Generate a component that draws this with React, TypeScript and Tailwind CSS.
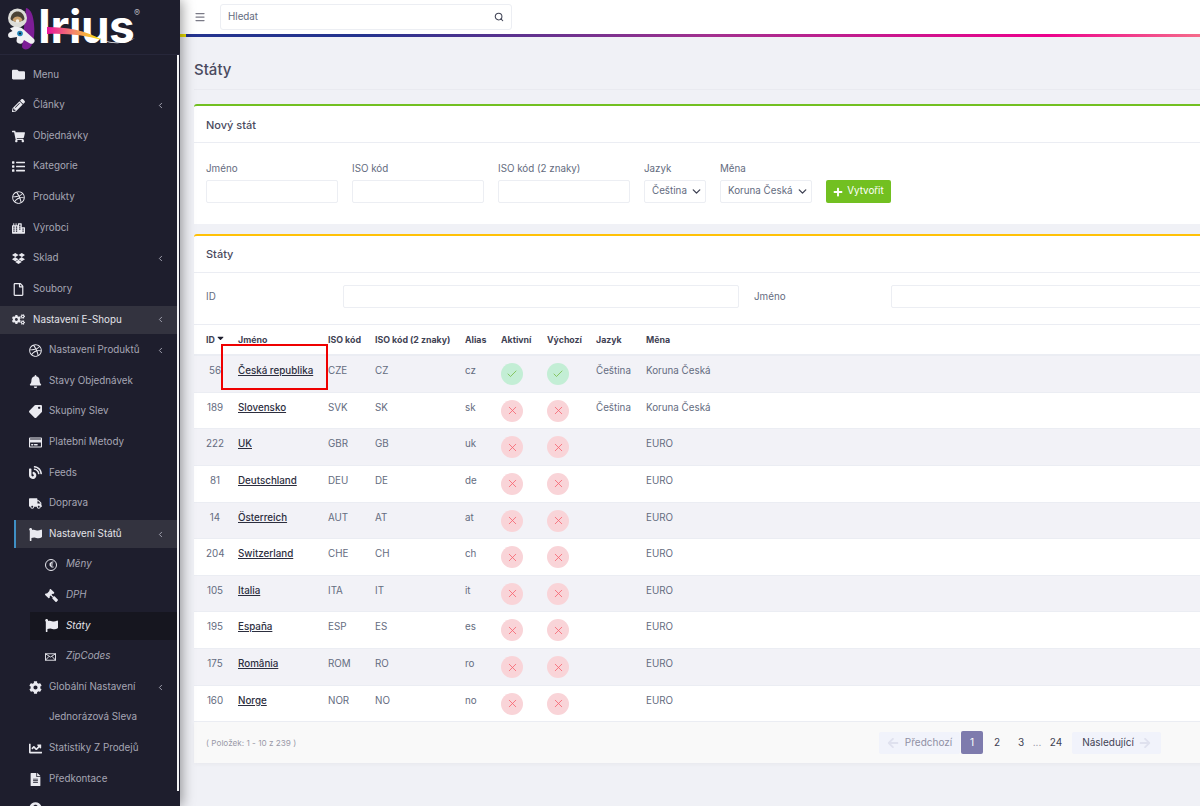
import React from "react";
import { ChevronLeft, Search, Menu as MenuIcon, Check, X, ChevronDown } from "lucide-react";
import {
  FaFolder, FaPencilAlt, FaShoppingCart, FaList, FaDribbble, FaCity, FaDropbox, FaRegFile, FaCogs,
  FaBell, FaTag, FaRegCreditCard, FaBlog, FaTruck, FaFlag, FaGavel, FaCog, FaChartLine, FaFileAlt,
  FaPlus, FaArrowLeft, FaArrowRight, FaCaretDown, FaEuroSign, FaUserCircle,
} from "react-icons/fa";

type NavItem = {
  label: string;
  icon?: React.ReactNode;
  level: 1 | 2 | 3;
  chevron?: boolean;
  active?: "open" | "branch" | "current";
};

const ic = "w-[13px] h-[13px]";
const EuroCircle = () => (
  <span className="flex h-[12px] w-[12px] items-center justify-center rounded-full border-[1.5px] border-[#e8e8ee]">
    <FaEuroSign className="h-[7px] w-[7px]" />
  </span>
);
const ZipIcon = () => (
  <svg viewBox="0 0 12 8" className="h-[8px] w-[11px]" fill="none" stroke="currentColor" strokeWidth="1">
    <rect x="0.5" y="0.5" width="11" height="7" />
    <path d="M0.5 0.5 6 4l5.5-3.5M0.5 7.5 4.5 3.2M11.5 7.5 7.5 3.2" />
  </svg>
);

const nav: NavItem[] = [
  { label: "Menu", icon: <FaFolder className={ic} />, level: 1 },
  { label: "Články", icon: <FaPencilAlt className={ic} />, level: 1, chevron: true },
  { label: "Objednávky", icon: <FaShoppingCart className={ic} />, level: 1 },
  { label: "Kategorie", icon: <FaList className={ic} />, level: 1 },
  { label: "Produkty", icon: <FaDribbble className={ic} />, level: 1 },
  { label: "Výrobci", icon: <FaCity className={ic} />, level: 1 },
  { label: "Sklad", icon: <FaDropbox className={ic} />, level: 1, chevron: true },
  { label: "Soubory", icon: <FaRegFile className={ic} />, level: 1 },
  { label: "Nastavení E-Shopu", icon: <FaCogs className={ic} />, level: 1, chevron: true, active: "open" },
  { label: "Nastavení Produktů", icon: <FaDribbble className={ic} />, level: 2, chevron: true },
  { label: "Stavy Objednávek", icon: <FaBell className={ic} />, level: 2 },
  { label: "Skupiny Slev", icon: <FaTag className={`${ic} -scale-x-100`} />, level: 2 },
  { label: "Platební Metody", icon: <FaRegCreditCard className={ic} />, level: 2 },
  { label: "Feeds", icon: <FaBlog className={ic} />, level: 2 },
  { label: "Doprava", icon: <FaTruck className={ic} />, level: 2 },
  { label: "Nastavení Států", icon: <FaFlag className={ic} />, level: 2, chevron: true, active: "branch" },
  { label: "Měny", icon: <EuroCircle />, level: 3 },
  { label: "DPH", icon: <FaGavel className={`${ic} -scale-x-100`} />, level: 3 },
  { label: "Státy", icon: <FaFlag className={ic} />, level: 3, active: "current" },
  { label: "ZipCodes", icon: <ZipIcon />, level: 3 },
  { label: "Globální Nastavení", icon: <FaCog className={ic} />, level: 2, chevron: true },
  { label: "Jednorázová Sleva", level: 2 },
  { label: "Statistiky Z Prodejů", icon: <FaChartLine className={ic} />, level: 2 },
  { label: "Předkontace", icon: <FaFileAlt className={ic} />, level: 2 },
];

function NavRow({ item }: { item: NavItem }) {
  const levelClass = item.level === 1 ? "pl-[12px]" : item.level === 2 ? "ml-[14px] pl-[15px]" : "ml-[30px] pl-[15px]";
  const iconBox = item.level === 1 ? "w-[21px]" : item.level === 2 ? "w-[20px]" : "w-[21px]";
  let bg = "";
  if (item.active === "open") bg = "bg-[#33333f]";
  if (item.active === "branch") bg = "bg-[#33333f] border-l-2 border-[#3f8fc4] !pl-[13px]";
  if (item.active === "current") bg = "bg-[#16161f]";
  const text = item.active ? "text-[#e4e4ea]" : "text-[#a6a6b4]";
  return (
    <div className={`my-[1px] flex h-[28.62px] shrink-0 items-center pr-[12px] ${levelClass} ${bg}`}>
      <span className={`flex shrink-0 items-center text-[#eaeaf0] ${iconBox}`}>{item.icon}</span>
      <span className={`flex-1 whitespace-nowrap text-[9.8px] ${item.level === 3 ? "italic" : ""} ${text}`}>{item.label}</span>
      {item.chevron && <ChevronLeft className="h-[9px] w-[9px] shrink-0 text-[#a6a6b4]" strokeWidth={2.5} />}
    </div>
  );
}

function Logo() {
  return (
    <div className="relative h-[55px] shrink-0 border-b border-[#27273a]">
      <svg viewBox="0 0 150 54" className="absolute left-0 top-0 h-[54px] w-[150px]">
        <path d="M26 8c5 1 7 7 8 16 1 10 0 22-6 25-3 1-5 0-6-2z" fill="#7d1d96" />
        <circle cx="17.5" cy="18" r="9.5" fill="#dcdcd8" />
        <path d="M10.5 19c.5-5 3.5-7.5 7-7.5s6.500 2.500 7 7.500c-1.500 3.500-12.500 3.500-14 0z" fill="#4a4236" />
        <path d="M12.500 20c1-2.500 3-3.500 5-3.500s4 1 5 3.500c-1.500 2.500-8.500 2.500-10 0z" fill="#c9a06e" />
        <circle cx="17.500" cy="21" r="1.800" fill="#f4eee3" />
        <path d="M10 28.500c4-2.500 10-2 13 .5l11 10c2 2.500-1 6-4 4.500l-6-3.500-1 2c-1 3-6 2-6.500-1l.5-4-6 1c-3 .5-4-4-1.500-5.500l3-1.500z" fill="#f1f1f3" />
        <circle cx="20" cy="33.500" r="2.800" fill="#2184b8" />
        <circle cx="20" cy="33.500" r="1.100" fill="#12232e" />
      </svg>
      <span className="absolute left-[38px] top-0 block h-[54px] whitespace-nowrap [font-family:'Liberation_Sans',sans-serif] text-[46px] font-bold leading-[52px] tracking-[-0.5px] text-white">Irius</span>
      <svg viewBox="0 0 150 54" className="absolute left-0 top-0 h-[54px] w-[150px]">
        <defs>
          <linearGradient id="sw" x1="0" x2="1" y1="0" y2="0">
            <stop offset="0" stopColor="#e8139c" />
            <stop offset="0.5" stopColor="#f58a6a" />
            <stop offset="1" stopColor="#f7e800" />
          </linearGradient>
        </defs>
        <path d="M47 27c20 0 38 3 55 13-18-5-36-7-55-6z" fill="url(#sw)" />
        <path d="M102 40c10 3 22 4 33-2-8 6-22 7-33 2z" fill="#ffffff" />
      </svg>
      <span className="absolute left-[134px] top-[7px] text-[9px] leading-[12px] text-[#b5b5bd]">®</span>
    </div>
  );
}

function Sidebar() {
  return (
    <aside className="relative z-10 flex h-full w-[180px] shrink-0 flex-col bg-[#1e1e2d] shadow-[2px_0_12px_rgba(0,0,0,0.4)]">
      <Logo />
      <div className="flex min-h-0 flex-1">
        <nav className="flex w-[177px] shrink-0 flex-col overflow-hidden pt-[4.7px]">
          {nav.map((n) => (
            <NavRow key={n.label} item={n} />
          ))}
          <div className="ml-[14px] flex h-[28px] shrink-0 pl-[15px] pt-[8px] text-[#eaeaf0]">
            <FaUserCircle className={ic} />
          </div>
        </nav>
        <div className="h-[736px] w-[2px] shrink-0 bg-[#f4f4f6]" />
      </div>
    </aside>
  );
}

const Field = ({ label, width }: { label: string; width: string }) => (
  <div className={`flex flex-col ${width}`}>
    <label className="mb-[4px] h-[14px] whitespace-nowrap text-[9.8px] leading-[14px] text-[#646c80]">{label}</label>
    <input readOnly className="h-[23px] w-full rounded-[2px] border border-[#eceef3] bg-white" />
  </div>
);

const SelectField = ({ label, value, width }: { label: string; value: string; width: string }) => (
  <div className={`flex flex-col ${width}`}>
    <label className="mb-[4px] h-[14px] text-[9.8px] leading-[14px] text-[#646c80]">{label}</label>
    <div className="flex h-[23px] items-center justify-between rounded-[2px] border border-[#eceef3] bg-white pl-[7px] pr-[2px]">
      <span className="whitespace-nowrap text-[9.8px] text-[#646c80]">{value}</span>
      <ChevronDown className="h-[13px] w-[13px] shrink-0 text-[#3f4254]" strokeWidth={2.5} />
    </div>
  </div>
);

type Row = { id: string; name: string; iso: string; iso2: string; alias: string; ok?: boolean; lang?: string; cur: string };
const rows: Row[] = [
  { id: "56", name: "Česká republika", iso: "CZE", iso2: "CZ", alias: "cz", ok: true, lang: "Čeština", cur: "Koruna Česká" },
  { id: "189", name: "Slovensko", iso: "SVK", iso2: "SK", alias: "sk", lang: "Čeština", cur: "Koruna Česká" },
  { id: "222", name: "UK", iso: "GBR", iso2: "GB", alias: "uk", cur: "EURO" },
  { id: "81", name: "Deutschland", iso: "DEU", iso2: "DE", alias: "de", cur: "EURO" },
  { id: "14", name: "Österreich", iso: "AUT", iso2: "AT", alias: "at", cur: "EURO" },
  { id: "204", name: "Switzerland", iso: "CHE", iso2: "CH", alias: "ch", cur: "EURO" },
  { id: "105", name: "Italia", iso: "ITA", iso2: "IT", alias: "it", cur: "EURO" },
  { id: "195", name: "España", iso: "ESP", iso2: "ES", alias: "es", cur: "EURO" },
  { id: "175", name: "România", iso: "ROM", iso2: "RO", alias: "ro", cur: "EURO" },
  { id: "160", name: "Norge", iso: "NOR", iso2: "NO", alias: "no", cur: "EURO" },
];

const cols = "grid grid-cols-[32px_90px_47px_90px_36px_46px_49px_50px_1fr] pl-[12px]";

const Badge = ({ ok }: { ok?: boolean }) =>
  ok ? (
    <span className="mt-[7px] flex h-[22px] w-[22px] items-center justify-center rounded-full bg-[#c3eed5]">
      <Check className="h-[12px] w-[12px] text-[#72b83c]" strokeWidth={1.5} />
    </span>
  ) : (
    <span className="mt-[7px] flex h-[22px] w-[22px] items-center justify-center rounded-full bg-[#f9d4d8]">
      <X className="h-[13px] w-[13px] text-[#f6626f]" strokeWidth={1.5} />
    </span>
  );

function StatesTable() {
  return (
    <div className="relative">
      <div className={`${cols} h-[31px] items-center border-b-2 border-[#ebedf3] text-[8.8px] font-bold text-[#3f4254]`}>
        <span className="flex items-center">ID<FaCaretDown className="ml-[1px] h-[10px] w-[9px] -translate-y-[2px] text-[#1e1e2d]" /></span>
        <span className="underline">Jméno</span>
        <span>ISO kód</span>
        <span className="whitespace-nowrap">ISO kód (2 znaky)</span>
        <span>Alias</span>
        <span>Aktivní</span>
        <span>Výchozí</span>
        <span>Jazyk</span>
        <span>Měna</span>
      </div>
      {rows.map((r, i) => (
        <div
          key={r.id}
          className={`${cols} h-[36.65px] border-b border-[#ebedf3] text-[9.8px] leading-[14px] text-[#646c80] ${i % 2 === 0 ? "bg-[#f2f2f7]" : "bg-white"}`}
        >
          <span className="w-[18px] pt-[8px] text-center">{r.id}</span>
          <span className="pt-[8px] font-medium text-[#2c2e3e] underline">{r.name}</span>
          <span className="pt-[8px]">{r.iso}</span>
          <span className="pt-[8px]">{r.iso2}</span>
          <span className="pt-[8px]">{r.alias}</span>
          <span><Badge ok={r.ok} /></span>
          <span><Badge ok={r.ok} /></span>
          <span className="whitespace-nowrap pt-[8px]">{r.lang}</span>
          <span className="whitespace-nowrap pt-[8px]">{r.cur}</span>
        </div>
      ))}
      <div className="absolute left-[27px] top-[19px] h-[46px] w-[107px] border-2 border-[#ef0000]" />
    </div>
  );
}

function Pagination() {
  return (
    <div className="ml-auto flex h-[23px] items-center pr-[73px] text-[10px] text-[#3f4254]">
      <span className="flex h-[22px] w-[81px] items-center justify-center gap-[6px] rounded-[2px] bg-[#f1f3fb] text-[#8f8fa3]">
        <FaArrowLeft className="h-[12px] w-[12px] text-[#dfe1ee]" />Předchozí
      </span>
      <span className="ml-[1px] flex h-[23px] w-[22px] items-center justify-center rounded-[2px] bg-[#7e7bad] text-white">1</span>
      <span className="w-[28px] text-center">2</span>
      <span className="w-[20px] text-center">3</span>
      <span className="w-[12px] text-center text-[#8f8fa3]">...</span>
      <span className="w-[26px] text-center">24</span>
      <span className="ml-[3px] flex h-[22px] w-[89px] items-center justify-center gap-[5px] rounded-[2px] bg-[#f1f3fb]">
        Následující<FaArrowRight className="h-[12px] w-[12px] text-[#dfe1ee]" />
      </span>
    </div>
  );
}

export default function App() {
  return (
    <div className="flex h-[806px] w-[1200px] overflow-hidden bg-[#f0f1f6] [font-family:Inter,sans-serif]">
      <Sidebar />
      <main className="flex min-w-0 flex-1 flex-col overflow-hidden">
        <header className="flex h-[34px] shrink-0 items-center bg-white pl-[14px]">
          <MenuIcon className="h-[12px] w-[12px] text-[#7a7a86]" strokeWidth={2.5} />
          <div className="ml-[14px] flex h-[26px] w-[292px] items-center justify-between rounded-[3px] border border-[#eceef3] pl-[7px] pr-[7px]">
            <span className="text-[9.8px] text-[#646c80]">Hledat</span>
            <Search className="h-[10px] w-[10px] text-[#3f4254]" strokeWidth={2.5} />
          </div>
        </header>
        <div className="h-[3px] shrink-0 bg-[linear-gradient(90deg,#e8dc00_6px,#25348f_6px,#25348f_18%,#a3308f_52%,#ec008c_85%,#f56b8a_100%)]" />
        <div className="mx-[14px] flex h-[53px] w-[1040px] shrink-0 items-center border-b border-[#e9eaf0] pt-[15px]">
          <h1 className="text-[15px] font-medium text-[#4a4a5e]">Státy</h1>
        </div>
        <div className="ml-[14px] mt-[14px] flex w-[1040px] shrink-0 flex-col gap-[10px]">
          <section className="h-[120px] rounded-t-[3px] border-t-2 border-[#72c021] bg-white">
            <div className="flex h-[37px] items-center border-b border-[#ebedf3] pl-[12px] pt-[2px] text-[11px] font-medium text-[#4a4a5e]">Nový stát</div>
            <div className="flex items-end gap-[14px] pl-[12px] pt-[19px]">
              <Field label="Jméno" width="w-[132px]" />
              <Field label="ISO kód" width="w-[132px]" />
              <Field label="ISO kód (2 znaky)" width="w-[132px]" />
              <SelectField label="Jazyk" value="Čeština" width="w-[62px]" />
              <SelectField label="Měna" value="Koruna Česká" width="w-[92px]" />
              <button className="flex h-[23px] w-[65px] items-center justify-center gap-[4px] rounded-[2px] bg-[#72c021] text-[9.8px] text-white">
                <FaPlus className="h-[10px] w-[10px]" />Vytvořit
              </button>
            </div>
          </section>
          <section className="rounded-t-[3px] border-t-2 border-[#ffc107] bg-white">
            <div className="flex h-[37px] items-center border-b border-[#ebedf3] pl-[12px] text-[11px] font-medium text-[#4a4a5e]">Státy</div>
            <div className="flex h-[52px] items-start border-b border-[#ebedf3] pl-[12px] pt-[12px] text-[9.8px] leading-[23px] text-[#646c80]">
              <span className="w-[137px]">ID</span>
              <input readOnly className="h-[23px] w-[396px] rounded-[2px] border border-[#eceef3] bg-white" />
              <span className="ml-[15px] w-[137px]">Jméno</span>
              <input readOnly className="h-[23px] w-[330px] rounded-[2px] border border-[#eceef3] bg-white" />
            </div>
            <StatesTable />
            <div className="flex h-[41px] items-center bg-[#f9f9f9] pl-[12px] shadow-[0_2px_4px_rgba(0,0,0,0.03)]">
              <span className="text-[8.2px] text-[#9a9aa8]">( Položek: 1 - 10 z 239 )</span>
              <Pagination />
            </div>
          </section>
        </div>
      </main>
    </div>
  );
}
